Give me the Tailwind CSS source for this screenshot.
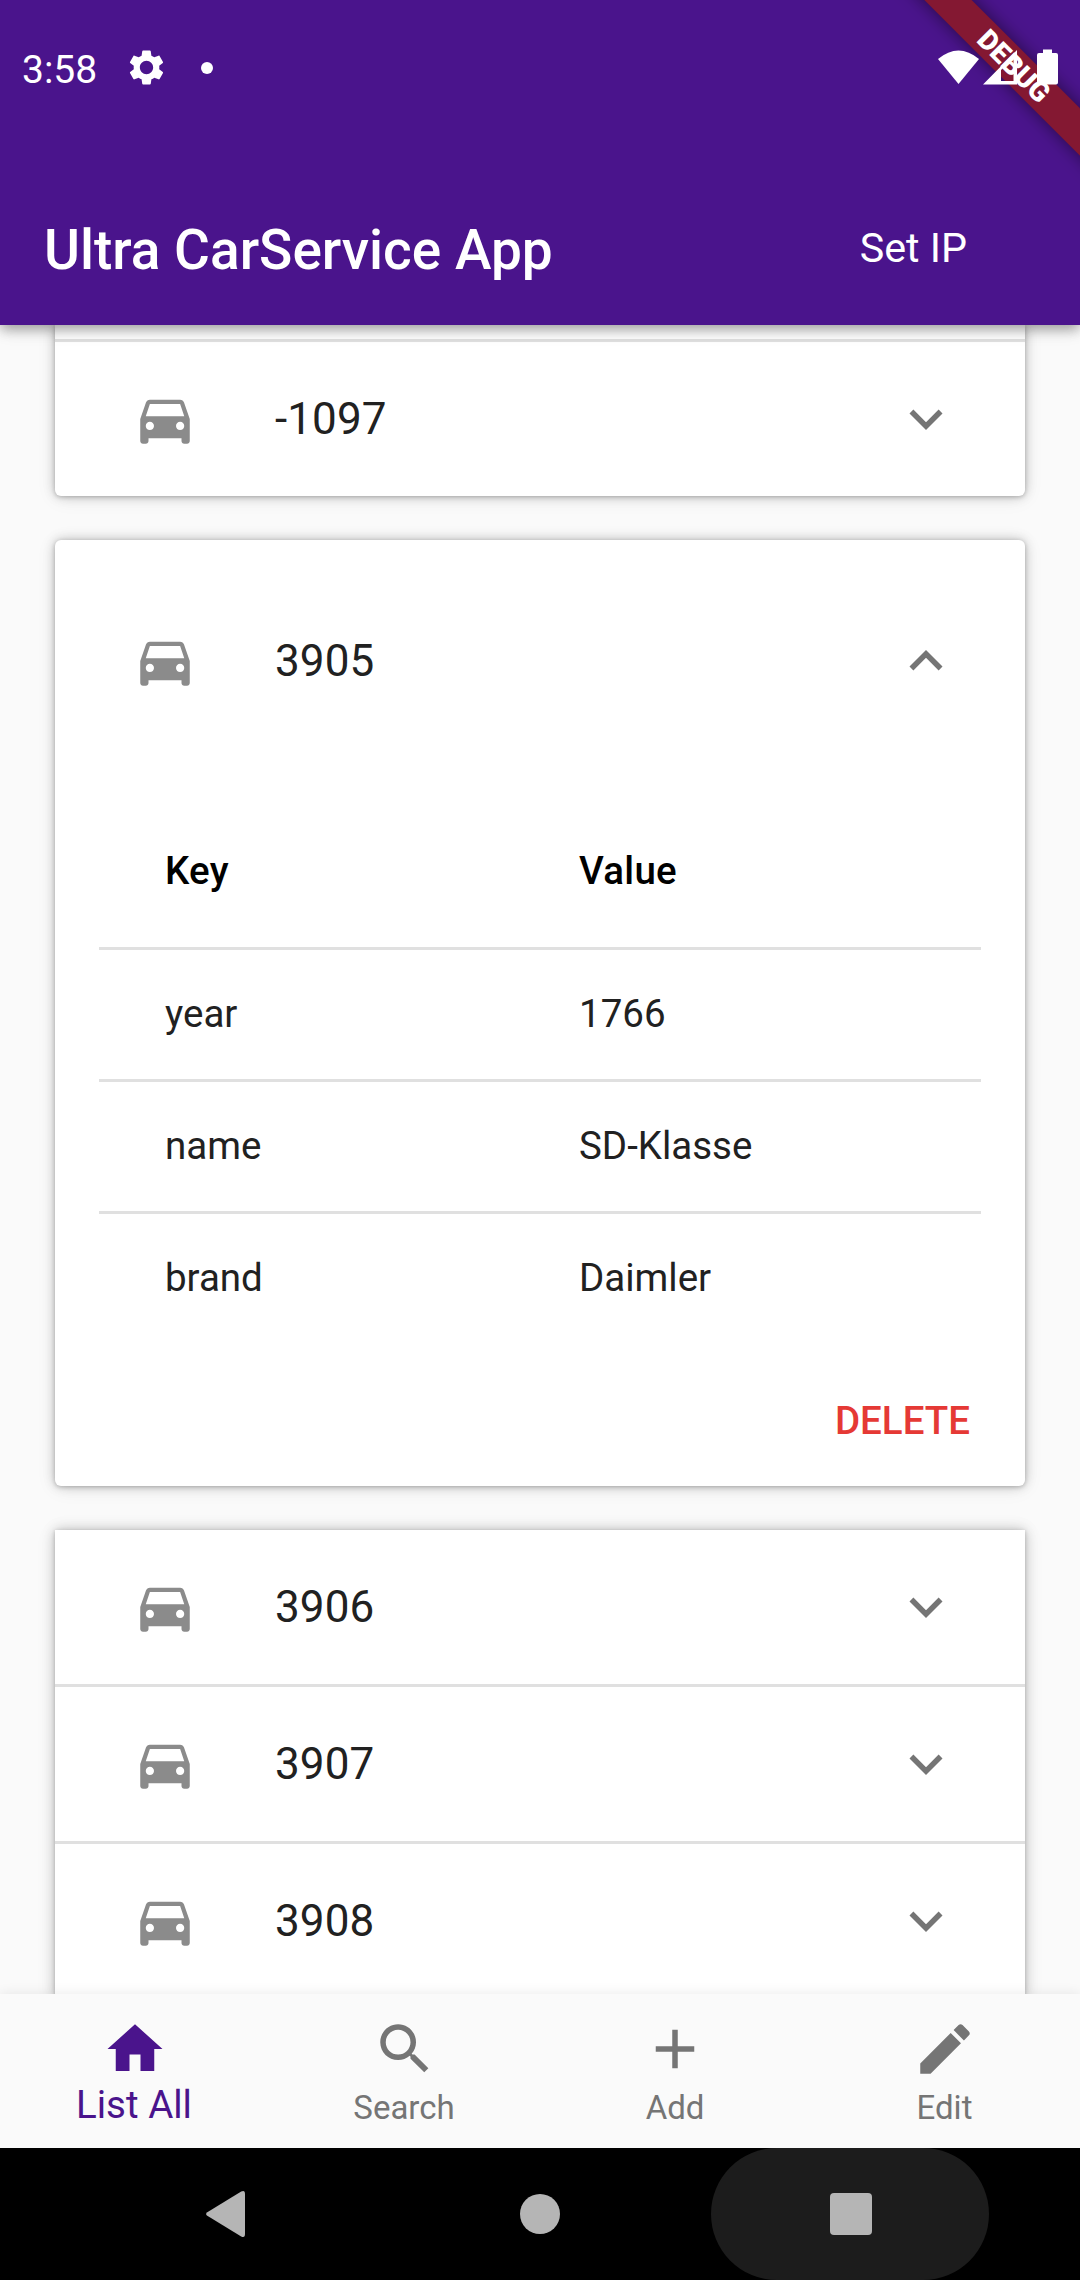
<!DOCTYPE html>
<html lang="en">
<head>
<meta charset="utf-8">
<title>Ultra CarService App</title>
<script src="https://cdn.jsdelivr.net/npm/@tailwindcss/browser@4"></script>
</head>
<body class="w-[1080px] h-[2280px] overflow-hidden bg-[#fafafa] font-['Roboto',sans-serif] text-[#212121]">
<svg class="hidden">
  <symbol id="car" viewBox="0 0 24 24"><path d="M18.92 6.01C18.72 5.42 18.16 5 17.5 5h-11c-.66 0-1.21.42-1.42 1.01L3 12v8c0 .55.45 1 1 1h1c.55 0 1-.45 1-1v-1h12v1c0 .55.45 1 1 1h1c.55 0 1-.45 1-1v-8l-2.08-5.99zM6.5 16c-.83 0-1.5-.67-1.5-1.5S5.67 13 6.5 13s1.5.67 1.5 1.5S7.33 16 6.5 16zm11 0c-.83 0-1.5-.67-1.5-1.5s.67-1.5 1.5-1.5 1.5.67 1.5 1.5-.67 1.5-1.5 1.5zM5 11l1.5-4.5h11L19 11H5z"/></symbol>
  <symbol id="more" viewBox="0 0 24 24"><path d="M16.59 8.59L12 13.17 7.41 8.59 6 10l6 6 6-6z"/></symbol>
</svg>
<div class="relative flex h-full flex-col">

  <header class="relative z-10 h-[325px] shrink-0 bg-[#4a148c] text-white shadow-[0_5px_11px_-2px_rgba(0,0,0,.2),0_6px_12px_rgba(0,0,0,.14),0_2px_20px_rgba(0,0,0,.12)]">
    <div class="flex h-[135px] items-center pl-[22px]">
      <span class="w-[76px] text-[39px] leading-[46px] mt-[5px]">3:58</span>
      <svg class="ml-[28px] size-[41px]" viewBox="0 0 24 24" fill="currentColor"><path d="M19.43 12.98c.04-.32.07-.64.07-.98s-.03-.66-.07-.98l2.11-1.65c.19-.15.24-.42.12-.64l-2-3.46c-.12-.22-.39-.3-.61-.22l-2.49 1c-.52-.4-1.08-.73-1.69-.98l-.38-2.65C14.46 2.18 14.25 2 14 2h-4c-.25 0-.46.18-.49.42l-.38 2.65c-.61.25-1.17.59-1.69.98l-2.49-1c-.23-.09-.49 0-.61.22l-2 3.46c-.13.22-.07.49.12.64l2.11 1.65c-.04.32-.07.65-.07.98s.03.66.07.98l-2.11 1.65c-.19.15-.24.42-.12.64l2 3.46c.12.22.39.3.61.22l2.49-1c.52.4 1.08.73 1.69.98l.38 2.65c.03.24.24.42.49.42h4c.25 0 .46-.18.49-.42l.38-2.65c.61-.25 1.17-.59 1.69-.98l2.49 1c.23.09.49 0 .61-.22l2-3.46c.12-.22.07-.49-.12-.64l-2.11-1.65zM12 15.9c-2.15 0-3.900-1.750-3.900-3.900s1.750-3.900 3.900-3.900 3.900 1.750 3.900 3.900-1.750 3.900-3.900 3.900z"/></svg>
      <span class="ml-[34px] size-3 rounded-full bg-white"></span>
    </div>
    <div class="flex h-[154px] mt-[36px] items-center justify-between pl-[44px] pr-[113px]">
      <h1 class="text-[55px] font-medium leading-[64px] mt-[3px]">Ultra CarService App</h1>
      <span class="text-[41.25px] leading-[48px]">Set IP</span>
    </div>
    <svg class="absolute right-0 top-0" width="260" height="200" viewBox="820 0 260 200">
      <defs><filter id="blur" x="-20%" y="-20%" width="140%" height="140%"><feGaussianBlur stdDeviation="9"/></filter></defs>
      <path d="M904 -20L952 -20 1100 128V175z" fill="#000" fill-opacity=".5" filter="url(#blur)"/>
      <path d="M924.3 0H971.7L1080 108.3V155.7z" fill="#841832"/>
      <text x="1014.500" y="76" transform="rotate(45 1014.5 65.5)" text-anchor="middle" font-size="28" font-weight="900" fill="#fff">DEBUG</text>
      <g fill="#fff">
        <path d="M938 59Q958.500 42 979 59L958.500 84z"/>
        <path fill-rule="evenodd" d="M983 84.500L1017 50V84.500zM1001 70V81H1013.500V57.500z"/>
        <path d="M1043 49.500h9v3.500h4a2 2 0 0 1 2 2v27.500a2 2 0 0 1-2 2h-17a2 2 0 0 1-2-2V55a2 2 0 0 1 2-2h4z"/>
      </g>
    </svg>
  </header>

  <main class="flex flex-1 flex-col gap-[44px] overflow-hidden px-[55px] text-[44px] tracking-[0.1px]">
    <section class="shrink-0 rounded-b-[6px] bg-white shadow-[0_1px_4px_rgba(0,0,0,.2),0_0_12px_rgba(0,0,0,.22),0_2px_20px_rgba(0,0,0,.08)]">
      <div class="h-[17px] border-b-3 border-[#e0e0e0]"></div>
      <div class="flex h-[154px] items-center pl-[77px] pr-[66px]">
        <svg class="size-[66px] fill-[#8b8b8b]"><use href="#car"/></svg>
        <span class="ml-[77px] flex-1">-1097</span>
        <svg class="size-[66px] fill-[#757575]"><use href="#more"/></svg>
      </div>
    </section>

    <section class="h-[946px] shrink-0 rounded-[6px] bg-white shadow-[0_1px_4px_rgba(0,0,0,.2),0_0_12px_rgba(0,0,0,.22),0_2px_20px_rgba(0,0,0,.08)]">
      <div class="flex h-[242px] items-center pl-[77px] pr-[66px]">
        <svg class="size-[66px] fill-[#8b8b8b]"><use href="#car"/></svg>
        <span class="ml-[77px] flex-1">3905</span>
        <svg class="size-[66px] rotate-180 fill-[#757575]"><use href="#more"/></svg>
      </div>
      <div class="mx-[44px] mt-[13px] text-[38.5px] tracking-normal">
        <div class="grid h-[155px] grid-cols-[414px_1fr] items-center border-b-3 border-[#e0e0e0] pl-[66px] font-medium tracking-[0.28px] text-black"><span>Key</span><span>Value</span></div>
        <div class="grid h-[132px] grid-cols-[414px_1fr] items-center border-b-3 border-[#e0e0e0] pb-[2px] pl-[66px]"><span>year</span><span>1766</span></div>
        <div class="grid h-[132px] grid-cols-[414px_1fr] items-center border-b-3 border-[#e0e0e0] pb-[2px] pl-[66px]"><span>name</span><span>SD-Klasse</span></div>
        <div class="grid h-[129px] grid-cols-[414px_1fr] items-center pb-[2px] pl-[66px]"><span>brand</span><span>Daimler</span></div>
      </div>
      <div class="mt-[12px] flex h-[132px] items-center justify-end pr-[55px] text-[38.5px] font-medium tracking-normal text-[#e53935]">DELETE</div>
    </section>

    <section class="shrink-0 bg-white shadow-[0_1px_4px_rgba(0,0,0,.2),0_0_12px_rgba(0,0,0,.22),0_2px_20px_rgba(0,0,0,.08)]">
      <div class="flex h-[157px] items-center border-b-3 border-[#e0e0e0] pl-[77px] pr-[66px]">
        <svg class="size-[66px] fill-[#8b8b8b]"><use href="#car"/></svg>
        <span class="ml-[77px] flex-1">3906</span>
        <svg class="size-[66px] fill-[#757575]"><use href="#more"/></svg>
      </div>
      <div class="flex h-[157px] items-center border-b-3 border-[#e0e0e0] pl-[77px] pr-[66px]">
        <svg class="size-[66px] fill-[#8b8b8b]"><use href="#car"/></svg>
        <span class="ml-[77px] flex-1">3907</span>
        <svg class="size-[66px] fill-[#757575]"><use href="#more"/></svg>
      </div>
      <div class="flex h-[154px] items-center pl-[77px] pr-[66px]">
        <svg class="size-[66px] fill-[#8b8b8b]"><use href="#car"/></svg>
        <span class="ml-[77px] flex-1">3908</span>
        <svg class="size-[66px] fill-[#757575]"><use href="#more"/></svg>
      </div>
    </section>
  </main>

  <nav class="relative z-10 grid h-[154px] shrink-0 grid-cols-4 bg-[#fafafa] pt-[22px] text-[33px] leading-[39px] text-[#757575] shadow-[0_0_12px_rgba(0,0,0,.09)]">
    <div class="flex flex-col items-center text-[38.5px] text-[#4a148c]">
      <svg class="size-[66px]" viewBox="0 0 24 24" fill="currentColor"><path d="M10 20v-6h4v6h5v-8h3L12 3 2 12h3v8z"/></svg>
      <span class="mt-[3px] pr-[2px]">List All</span>
    </div>
    <div class="flex flex-col items-center">
      <svg class="size-[66px]" viewBox="0 0 24 24" fill="currentColor"><path d="M15.500 14h-.79l-.28-.27C15.410 12.590 16 11.110 16 9.500 16 5.910 13.090 3 9.500 3S3 5.910 3 9.500 5.910 16 9.500 16c1.610 0 3.090-.59 4.230-1.570l.27.28v.79l5 4.990L20.490 19l-4.990-5zm-6 0C7.010 14 5 11.990 5 9.500S7.010 5 9.500 5 14 7.010 14 9.500 11.990 14 9.500 14z"/></svg>
      <span class="mt-[6px] pr-[2px]">Search</span>
    </div>
    <div class="flex flex-col items-center">
      <svg class="size-[66px]" viewBox="0 0 24 24" fill="currentColor"><path d="M19 13h-6v6h-2v-6H5v-2h6V5h2v6h6v2z"/></svg>
      <span class="mt-[6px]">Add</span>
    </div>
    <div class="flex flex-col items-center">
      <svg class="size-[66px]" viewBox="0 0 24 24" fill="currentColor"><path d="M3 17.250V21h3.750L17.810 9.940l-3.750-3.750L3 17.250zM20.710 7.040c.39-.39.39-1.020 0-1.410l-2.340-2.340c-.39-.39-1.020-.39-1.410 0l-1.830 1.830 3.750 3.750 1.830-1.830z"/></svg>
      <span class="mt-[6px] pr-px">Edit</span>
    </div>
  </nav>

  <footer class="relative z-10 flex h-[132px] shrink-0 items-center bg-black pl-[206px]">
    <svg class="h-[46px] w-[39px]" viewBox="0 0 39 46" fill="#b5b5b5"><path d="M1.300 21.200L35.200.6Q39-1.200 39 3V43Q39 47.200 35.200 45.400L1.300 24.800Q-1.100 23 1.300 21.200z"/></svg>
    <span class="ml-[275px] size-10 rounded-full bg-[#b5b5b5]"></span>
    <div class="ml-[151px] flex h-full w-[278px] items-center justify-center rounded-full bg-[#1c1c1c]"><span class="ml-0.5 size-[42px] rounded-[4px] bg-[#b5b5b5]"></span></div>
  </footer>
</div>
</body>
</html>
